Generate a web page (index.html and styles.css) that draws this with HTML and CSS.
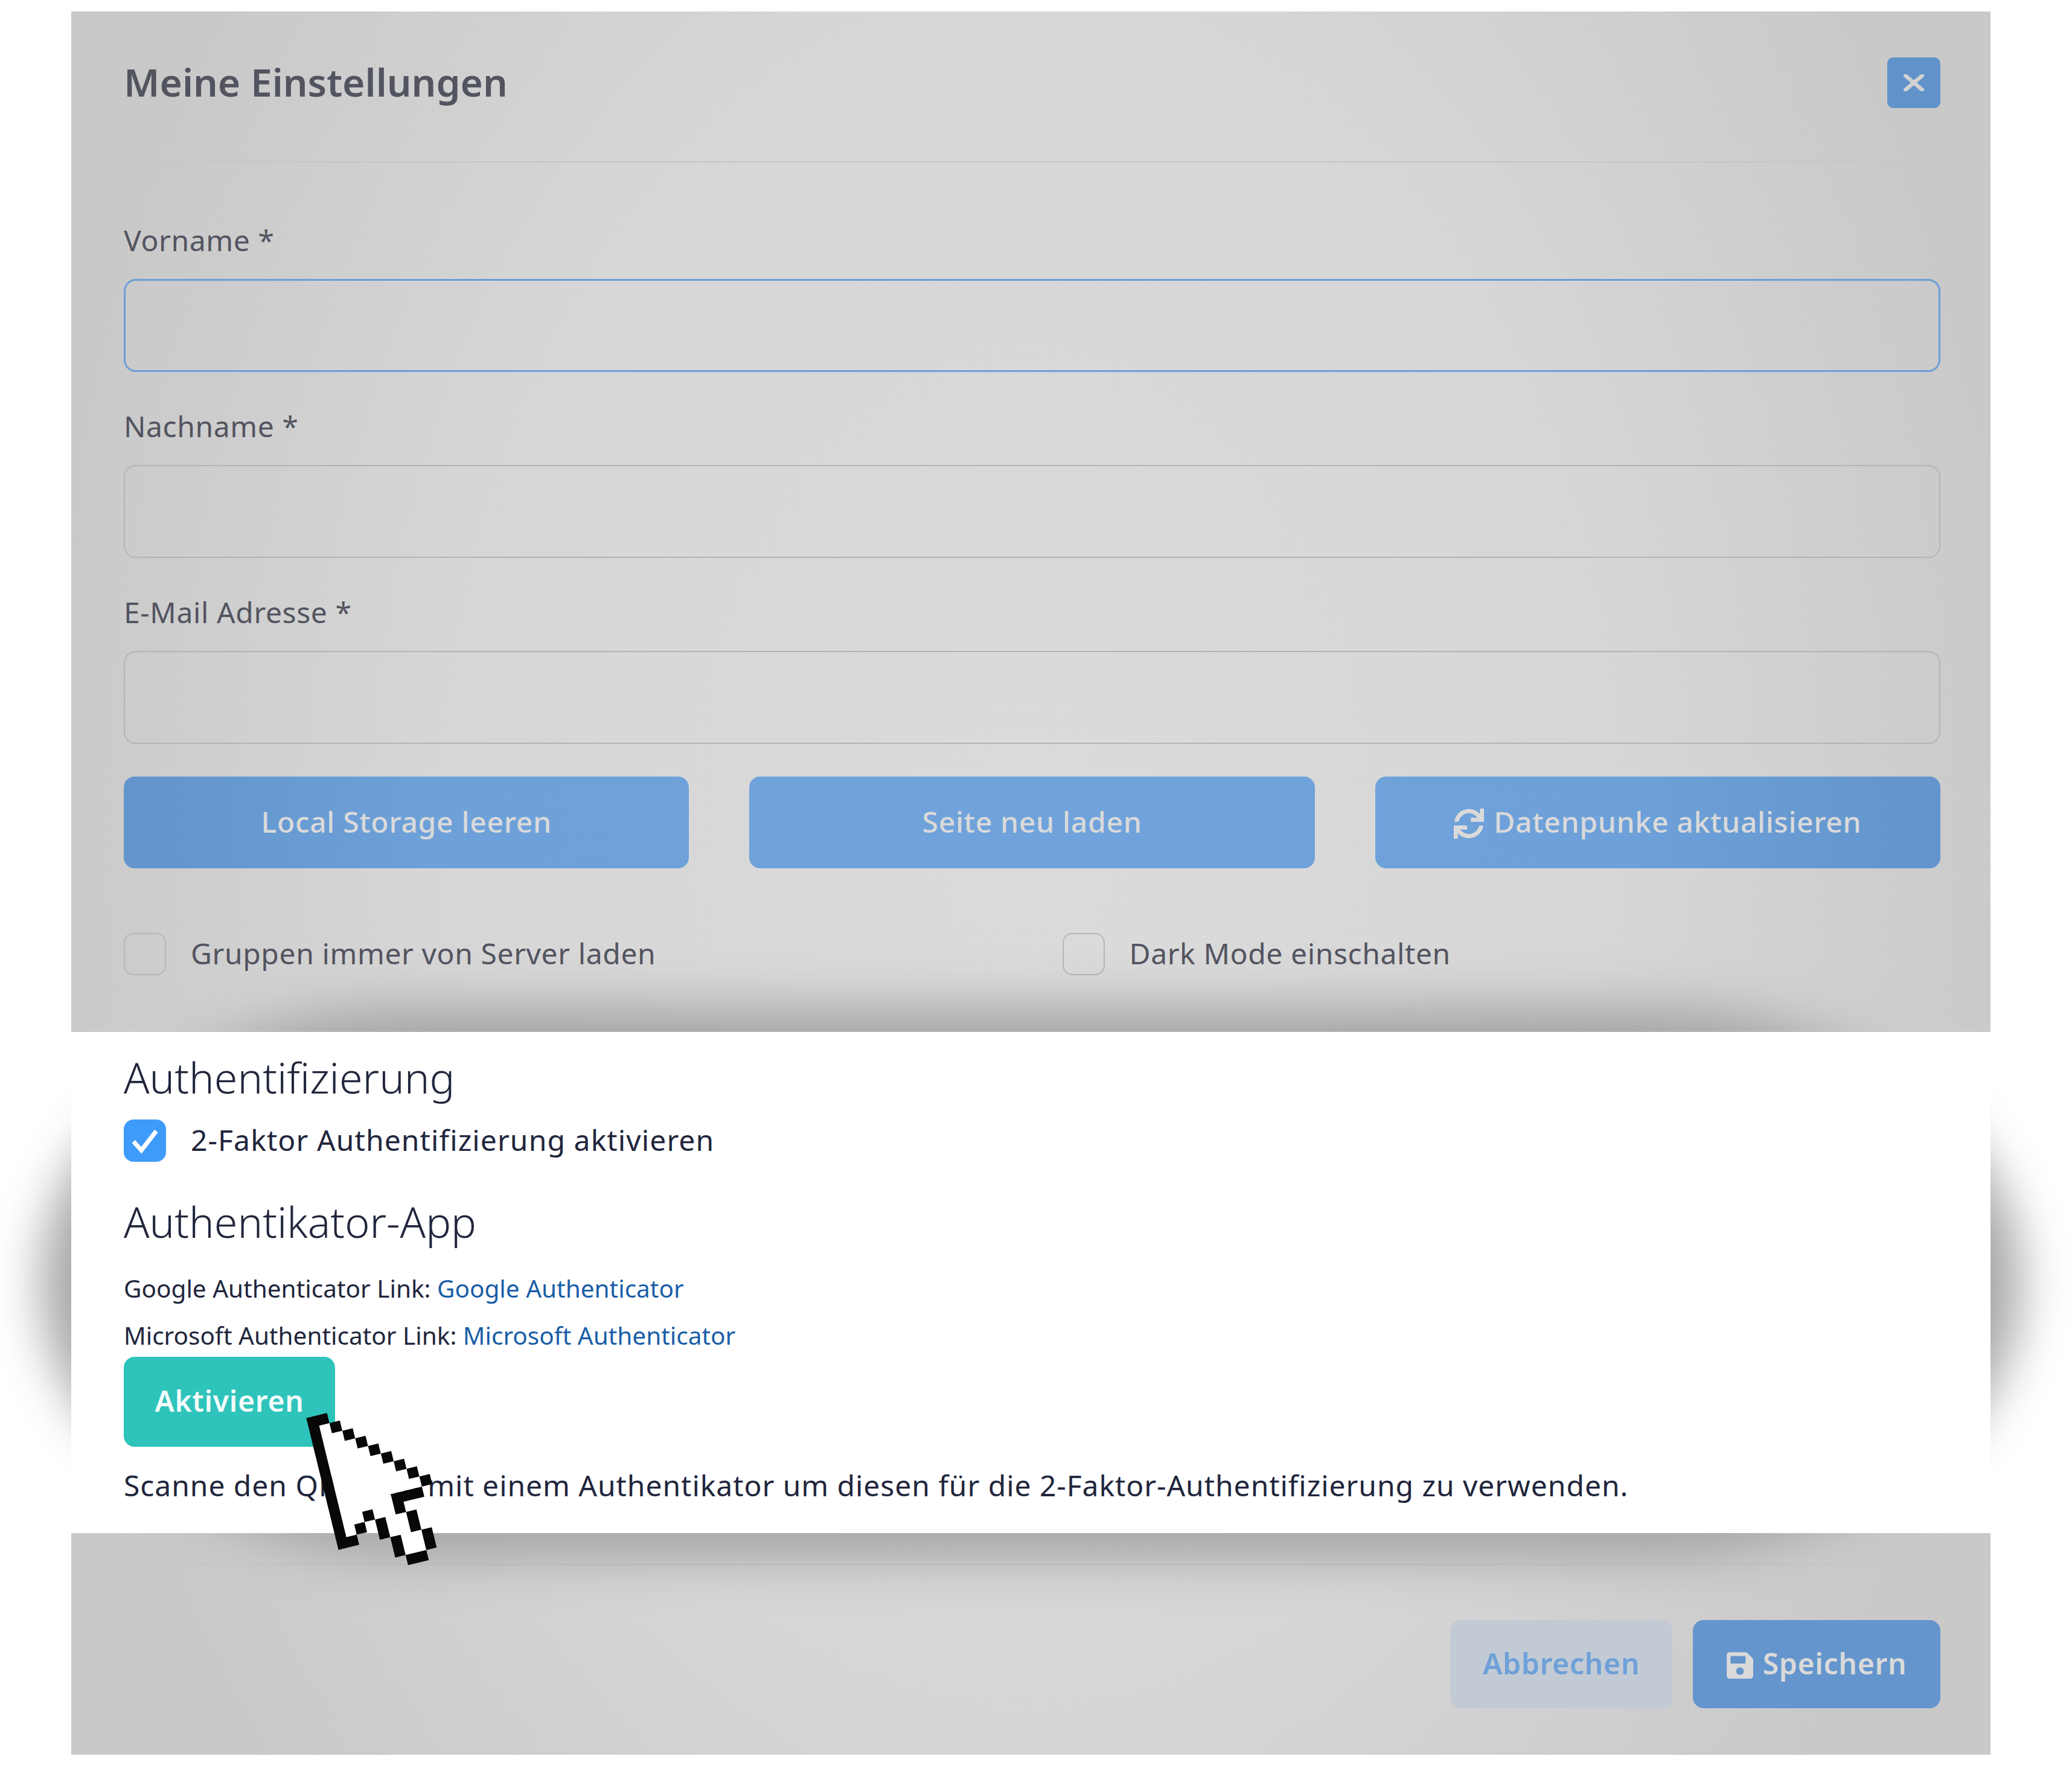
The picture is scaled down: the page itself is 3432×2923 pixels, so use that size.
FILE: index.html
```html
<!DOCTYPE html>
<html lang="de">
<head>
    <meta charset="UTF-8">
    <title>Meine Einstellungen</title>
    <link rel="stylesheet" href="styles.css">
</head>
<body>
    <div class="modal">
        <header class="modal-header">
            <h1 class="modal-title">Meine Einstellungen</h1>
            <button class="close-button" aria-label="Schließen">
                <svg class="close-icon" viewBox="0 0 32 26"><path d="M3 2 L29 24 M29 2 L3 24"/></svg>
            </button>
        </header>

        <div class="modal-body">
            <div class="fields">
                <div class="field">
                    <label class="field-label">Vorname *</label>
                    <div class="input input-focus"></div>
                </div>
                <div class="field">
                    <label class="field-label">Nachname *</label>
                    <div class="input"></div>
                </div>
                <div class="field">
                    <label class="field-label">E-Mail Adresse *</label>
                    <div class="input"></div>
                </div>
            </div>

            <div class="actions">
                <button class="btn btn-primary">Local Storage leeren</button>
                <button class="btn btn-primary">Seite neu laden</button>
                <button class="btn btn-primary">
                    <svg class="btn-icon" viewBox="0 0 512 512"><path d="M440.65 12.57l4 82.77A247.16 247.16 0 0 0 255.83 8C134.73 8 33.91 94.92 12.29 209.82A12 12 0 0 0 24.09 224h49.05a12 12 0 0 0 11.67-9.26 175.91 175.91 0 0 1 317-56.94l-101.46-4.86a12 12 0 0 0-12.57 12v47.41a12 12 0 0 0 12 12H500a12 12 0 0 0 12-12V12a12 12 0 0 0-12-12h-47.37a12 12 0 0 0-11.98 12.57zM255.83 432a175.61 175.61 0 0 1-146-77.8l101.8 4.87a12 12 0 0 0 12.57-12v-47.4a12 12 0 0 0-12-12H12a12 12 0 0 0-12 12V500a12 12 0 0 0 12 12h47.35a12 12 0 0 0 12-12.6l-4.15-82.57A247.17 247.17 0 0 0 255.83 504c121.11 0 221.93-86.92 243.55-201.82a12 12 0 0 0-11.8-14.18h-49.05a12 12 0 0 0-11.67 9.26A175.86 175.86 0 0 1 255.83 432z"/></svg>
                    Datenpunke aktualisieren
                </button>
            </div>

            <div class="options">
                <div class="check-row">
                    <span class="checkbox"></span>
                    <span class="check-label">Gruppen immer von Server laden</span>
                </div>
                <div class="check-row">
                    <span class="checkbox"></span>
                    <span class="check-label">Dark Mode einschalten</span>
                </div>
            </div>
        </div>

        <section class="auth-panel">
            <div class="auth-content">
                <h2 class="auth-heading">Authentifizierung</h2>
                <div class="check-row">
                    <span class="checkbox checkbox-on">
                        <svg class="check-icon" viewBox="0 0 40 40"><path d="M7 21 L16 31 L33 9"/></svg>
                    </span>
                    <span class="check-label">2-Faktor Authentifizierung aktivieren</span>
                </div>
                <h2 class="auth-heading auth-heading-app">Authentikator-App</h2>
                <p class="auth-link">Google Authenticator Link: <a href="#">Google Authenticator</a></p>
                <p class="auth-link auth-link-last">Microsoft Authenticator Link: <a href="#">Microsoft Authenticator</a></p>
                <button class="btn btn-teal">Aktivieren</button>
                <p class="auth-hint">Scanne den QR-Code mit einem Authentikator um diesen für die 2-Faktor-Authentifizierung zu verwenden.</p>
            </div>
        </section>

        <footer class="modal-footer">
            <button class="btn btn-cancel">Abbrechen</button>
            <button class="btn btn-save">
                <svg class="btn-icon btn-icon-save" viewBox="0 0 448 512"><path d="M433.941 129.941l-83.882-83.882A48 48 0 0 0 316.118 32H48C21.49 32 0 53.49 0 80v352c0 26.51 21.49 48 48 48h352c26.51 0 48-21.49 48-48V163.882a48 48 0 0 0-14.059-33.941zM224 416c-35.346 0-64-28.654-64-64 0-35.346 28.654-64 64-64s64 28.654 64 64c0 35.346-28.654 64-64 64zm96-304.52V212c0 6.627-5.373 12-12 12H76c-6.627 0-12-5.373-12-12V108c0-6.627 5.373-12 12-12h228.52c3.183 0 6.235 1.264 8.485 3.515l3.48 3.48A11.996 11.996 0 0 1 320 111.48z"/></svg>
                Speichern
            </button>
        </footer>

        <!-- pixel cursor, drawn on a tilted grid of cells -->
        <svg class="cursor" viewBox="0 0 240 280">
            <g transform="matrix(17.17 -4.17 4.1 16.8 7.3 8.3)">
                <path fill="#fff" d="M1 1h1v1h1v1h1v1h1v1h1v1h1v1h1v1h1v1h-3v2h1v2h1v2h-2v-2h-1v-2h-1v-1h-1v1h-1v1h-1z M3 11h1v1h-1z"/>
                <path fill="#080808" d="M0 0h2v1h-1v11h1v-1h1v-1h1v1h-1v1h-1v1h-2z M2 1h1v1h-1z M3 2h1v1h-1z M4 3h1v1h-1z M5 4h1v1h-1z M6 5h1v1h-1z M7 6h1v1h-1z M8 7h1v1h-1z M9 8h1v1h-1z M6 9h3v1h-2v1h-1z M4 11h1v2h-1z M7 11h1v2h-1z M5 13h1v2h-1z M8 13h1v2h-1z M6 15h2v1h-2z"/>
            </g>
        </svg>
    </div>
</body>
</html>
```

FILE: styles.css
```css
:root {
    --text-muted: #52545f;
    --text-dark: #21263c;
    --on-blue: #dadada;
}

html, body {
    margin: 0;
    padding: 0;
    background: #fff;
}

body {
    height: 2923px;
    overflow: hidden;
    font-family: "Noto Sans", "Open Sans", sans-serif;
}

.modal {
    position: relative;
    width: 3179px;
    margin: 19px 0 0 118px;
    background: radial-gradient(ellipse 1650px 2400px at 1590px 1380px, #dbdbdb 0%, #d6d6d6 60%, #c9c9c9 100%);
}

.modal-header {
    display: flex;
    justify-content: space-between;
    align-items: flex-start;
    height: 248px;
    padding: 0 83px 0 87px;
    border-bottom: 2px solid #c6c6c6;
}

.modal-title {
    margin: 76px 0 0;
    font-size: 64px;
    font-weight: 600;
    line-height: 82px;
    color: var(--text-muted);
}

.close-button {
    display: flex;
    align-items: center;
    justify-content: center;
    width: 88px;
    height: 84px;
    margin-top: 76px;
    padding: 0;
    border: none;
    border-radius: 10px;
    background: #6193ca;
}

.close-icon {
    width: 34px;
    height: 28px;
    fill: none;
    stroke: #d2d2d2;
    stroke-width: 6;
    stroke-linecap: round;
}

.modal-body {
    padding: 100px 83px 94px 87px;
}

.fields {
    display: flex;
    flex-direction: column;
    gap: 61px;
}

.field-label {
    display: block;
    margin-bottom: 35px;
    font-size: 48px;
    line-height: 58px;
    letter-spacing: 0.6px;
    color: var(--text-muted);
}

.input {
    height: 154px;
    box-sizing: border-box;
    border: 2px solid #b4b4b4;
    border-radius: 20px;
}

.input-focus {
    border: 3px solid #6b9fd8;
}

.btn {
    display: flex;
    align-items: center;
    justify-content: center;
    gap: 16px;
    border: none;
    border-radius: 18px;
    padding: 0 0 4px;
    font-family: inherit;
    font-size: 48px;
    font-weight: 500;
    letter-spacing: 0.7px;
}

.btn-primary {
    height: 152px;
    color: var(--on-blue);
    background: radial-gradient(ellipse 1650px 2400px at 1708px 1400px, #70a3db 0%, #6ea1d9 60%, #5f91c8 100%) fixed;
}

.actions {
    display: grid;
    grid-template-columns: repeat(3, 1fr);
    gap: 100px;
    margin-top: 54px;
}

.btn-icon {
    width: 50px;
    height: 50px;
    margin-top: 8px;
    fill: var(--on-blue);
}

.btn-icon-save {
    width: 44px;
}

.options {
    display: grid;
    grid-template-columns: 1fr 1fr;
    gap: 100px;
    margin-top: 107px;
}

.check-row {
    display: flex;
    align-items: center;
    gap: 41px;
}

.checkbox {
    display: flex;
    align-items: center;
    justify-content: center;
    width: 70px;
    height: 70px;
    box-sizing: border-box;
    border: 2px solid #b6b6b6;
    border-radius: 16px;
}

.checkbox-on {
    border: none;
    background: #3f9bfa;
}

.check-icon {
    width: 58px;
    height: 58px;
    fill: none;
    stroke: #fff;
    stroke-width: 5;
}

.check-label {
    padding-bottom: 3px;
    font-size: 48px;
    line-height: 60px;
    letter-spacing: 0.6px;
    color: var(--text-muted);
}

/* white panel with the soft oval shadow behind it */
.auth-panel {
    position: relative;
    height: 830px;
}

.auth-panel::before {
    content: "";
    position: absolute;
    left: -50px;
    right: -50px;
    top: -42px;
    bottom: -42px;
    border-radius: 620px / 455px;
    background: #a6a6a6;
    filter: blur(40px);
}

.auth-content {
    position: relative;
    box-sizing: border-box;
    height: 100%;
    padding: 25px 87px 0;
    background: #fff;
}

.auth-content .check-label {
    letter-spacing: 1.1px;
    color: var(--text-dark);
}

.auth-heading {
    margin: 0 0 20px;
    font-size: 70px;
    font-weight: 300;
    line-height: 100px;
    color: var(--text-dark);
}

.auth-heading-app {
    margin: 49px 0 33px;
}

.auth-link {
    margin: 0 0 22px;
    font-size: 40.5px;
    line-height: 56px;
    color: var(--text-dark);
}

.auth-link-last {
    margin-bottom: 7px;
}

.auth-link a {
    color: #1a5ea8;
    text-decoration: none;
}

.btn-teal {
    width: 350px;
    height: 149px;
    font-weight: 600;
    color: #f2fbfa;
    background: #2ec4bc;
}

.auth-hint {
    margin: 34px 0 0;
    font-size: 48px;
    line-height: 60px;
    letter-spacing: 0.95px;
    color: var(--text-dark);
}

.modal-footer {
    display: flex;
    justify-content: flex-end;
    gap: 34px;
    margin-top: 51px;
    padding: 91px 83px 77px 0;
    border-top: 2px solid #c6c6c6;
}

.btn-cancel {
    width: 368px;
    height: 146px;
    font-weight: 600;
    color: #6fa0d8;
    background: #c2cbd5;
}

.btn-save {
    width: 410px;
    height: 146px;
    font-weight: 600;
    color: var(--on-blue);
    background: #6495cd;
}

.cursor {
    position: absolute;
    left: 382px;
    top: 2321px;
    width: 240px;
    height: 280px;
}
```
